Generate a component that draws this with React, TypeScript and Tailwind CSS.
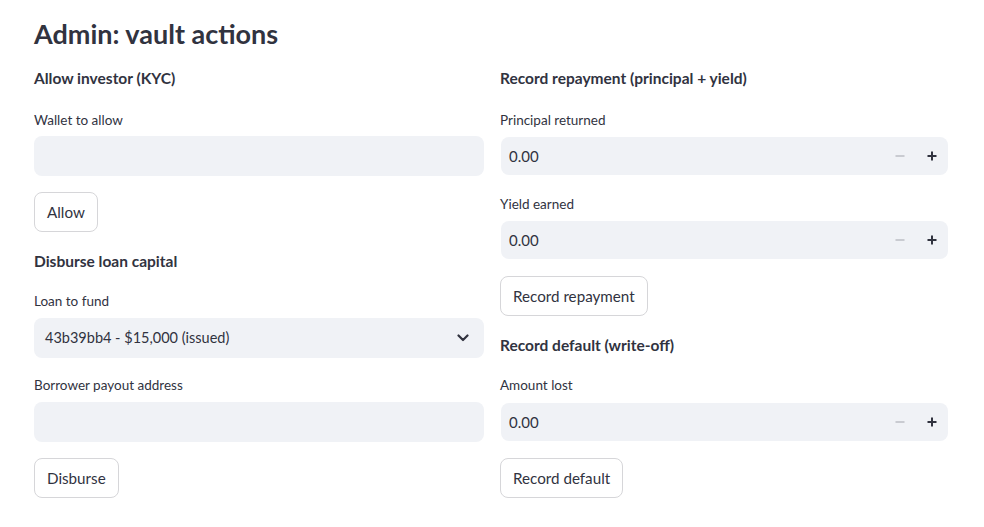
const font = { fontFamily: "Lato, 'Noto Sans', sans-serif" };

function Label({ children, className = "" }: { children: string; className?: string }) {
  return <div className={`h-5 text-[13.5px] leading-5 text-[#31333f] ${className}`}>{children}</div>;
}

function Heading({ children, className = "" }: { children: string; className?: string }) {
  return <div className={`h-6 text-[15.5px] font-bold leading-6 text-[#31333f] ${className}`}>{children}</div>;
}

function TextInput({ className = "" }: { className?: string }) {
  return <div className={`h-10 w-full rounded-lg bg-[#f0f2f6] ${className}`} />;
}

function Button({ children, className = "" }: { children: string; className?: string }) {
  return (
    <div className={className}>
      <button className="h-10 rounded-lg border border-[#d6d6d9] bg-white px-3 text-[15.2px] text-[#31333f]">
        {children}
      </button>
    </div>
  );
}

// number field with the step buttons on the right
function NumberInput({ className = "" }: { className?: string }) {
  return (
    <div className={`ml-px flex h-[38px] items-center rounded-lg bg-[#f0f2f6] pl-2 ${className}`}>
      <span className="flex-1 text-[15px] text-[#31333f]">0.00</span>
      <span className="flex h-full w-8 items-center justify-center">
        <svg width="10" height="10" viewBox="0 0 10 10">
          <path d="M0.5 5h9" stroke="#c9cbd1" strokeWidth="2" />
        </svg>
      </span>
      <span className="flex h-full w-8 items-center justify-center">
        <svg width="10" height="10" viewBox="0 0 10 10">
          <path d="M0.5 5h9M5 0.5v9" stroke="#31333f" strokeWidth="2" />
        </svg>
      </span>
    </div>
  );
}

function Select({ value, className = "" }: { value: string; className?: string }) {
  return (
    <div className={`flex h-10 w-full items-center rounded-lg bg-[#f0f2f6] pl-[11px] pr-[15px] ${className}`}>
      <span className="flex-1 text-[14.5px] text-[#31333f]">{value}</span>
      <svg width="12" height="8" viewBox="0 0 12 8">
        <path d="M1.5 1.5L6 6l4.5-4.5" fill="none" stroke="#31333f" strokeWidth="2.2" strokeLinecap="round" strokeLinejoin="round" />
      </svg>
    </div>
  );
}

export default function App() {
  return (
    <div className="h-[527px] w-[984px] bg-white pl-[34px] pr-[36px] pt-[14px]" style={font}>
      <h2 className="h-10 text-[27px] font-bold leading-10 text-[#31333f]">Admin: vault actions</h2>
      <div className="mt-3 grid grid-cols-[450px_1fr] gap-4">
        <div className="flex flex-col">
          <Heading>Allow investor (KYC)</Heading>
          <Label className="mt-5">Wallet to allow</Label>
          <TextInput className="mt-1.5" />
          <Button className="mt-4">Allow</Button>
          <Heading className="mt-[17px]">Disburse loan capital</Heading>
          <Label className="mt-[18px]">Loan to fund</Label>
          <Select className="mt-[7px]" value="43b39bb4 - $15,000 (issued)" />
          <Label className="mt-[17px]">Borrower payout address</Label>
          <TextInput className="mt-[7px]" />
          <Button className="mt-4">Disburse</Button>
        </div>
        <div className="flex flex-col">
          <Heading>Record repayment (principal + yield)</Heading>
          <Label className="mt-5">Principal returned</Label>
          <NumberInput className="mt-[7px]" />
          <Label className="mt-[19px]">Yield earned</Label>
          <NumberInput className="mt-[7px]" />
          <Button className="mt-[17px]">Record repayment</Button>
          <Heading className="mt-[17px]">Record default (write-off)</Heading>
          <Label className="mt-[18px]">Amount lost</Label>
          <NumberInput className="mt-2" />
          <Button className="mt-[17px]">Record default</Button>
        </div>
      </div>
    </div>
  );
}
